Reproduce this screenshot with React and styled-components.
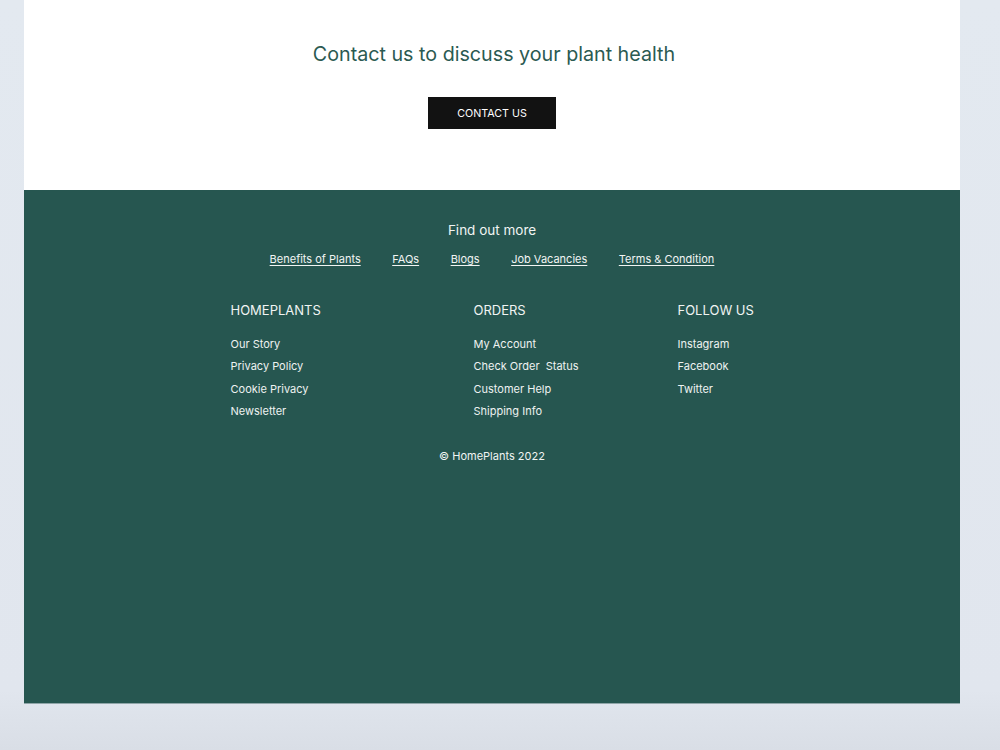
import React from 'react';
import styled, { createGlobalStyle } from 'styled-components';

const GlobalStyle = createGlobalStyle`
  html, body {
    margin: 0;
    padding: 0;
  }
  body {
    min-height: 750px;
    background: linear-gradient(to bottom, #e3e9f0 0%, #e1e6ee 92%, #d9dee6 100%);
    font-family: Inter, "Noto Sans", sans-serif;
  }
`;

const Page = styled.div`
  width: 936px;
  margin-left: 24px;
`;

const ContactSection = styled.section`
  height: 190px;
  background: #ffffff;
  display: flex;
  flex-direction: column;
  align-items: center;
  padding-top: 42px;
  box-sizing: border-box;
`;

const Heading = styled.h2`
  margin: 0 0 0 4px;
  font-size: 19.7px;
  font-weight: 400;
  color: #2b5a52;
  line-height: 24px;
`;

const ContactButton = styled.button`
  margin-top: 31px;
  width: 128px;
  height: 32px;
  border: none;
  background: #121212;
  color: #ffffff;
  font-family: Inter, sans-serif;
  font-size: 10.7px;
  text-transform: uppercase;
  cursor: pointer;
`;

const Footer = styled.footer`
  height: 514px;
  background: #265650;
  color: #f1f4f3;
  box-sizing: border-box;
  padding-top: 30px;
  display: flex;
  flex-direction: column;
  align-items: center;
  border-bottom: 1px solid #8fa5a8;
`;

const FooterTitle = styled.div`
  font-size: 13.5px;
  line-height: 20px;
`;

const LinkRow = styled.nav`
  display: flex;
  gap: 31.5px;
  margin-top: 12px;
`;

const TopLink = styled.a`
  color: #f1f4f3;
  font-size: 11px;
  line-height: 14px;
  text-decoration: underline;
  text-underline-offset: 2px;
`;

const Columns = styled.div`
  display: grid;
  grid-template-columns: 243px 204px 80px;
  margin-top: 36px;
  margin-left: 4px;
`;

const Column = styled.div`
  display: flex;
  flex-direction: column;
`;

const ColumnTitle = styled.div`
  font-size: 13px;
  line-height: 16px;
  text-transform: uppercase;
  margin-bottom: 15px;
`;

const ColumnLink = styled.a`
  color: #eef2f1;
  font-size: 11px;
  line-height: 22.3px;
  white-space: pre;
  text-decoration: none;
`;

const Copyright = styled.div`
  margin-top: 27px;
  font-size: 11px;
  line-height: 14px;
`;

const topLinks = ['Benefits of Plants', 'FAQs', 'Blogs', 'Job Vacancies', 'Terms & Condition'];

const columns = [
  { title: 'HomePlants', items: ['Our Story', 'Privacy Policy', 'Cookie Privacy', 'Newsletter'] },
  { title: 'Orders', items: ['My Account', 'Check Order  Status', 'Customer Help', 'Shipping Info'] },
  { title: 'Follow Us', items: ['Instagram', 'Facebook', 'Twitter'] },
];

const App = () => {
  return (
    <>
      <GlobalStyle />
      <Page>
        <ContactSection>
          <Heading>Contact us to discuss your plant health</Heading>
          <ContactButton>Contact us</ContactButton>
        </ContactSection>
        <Footer>
          <FooterTitle>Find out more</FooterTitle>
          <LinkRow>
            {topLinks.map((link) => (
              <TopLink key={link} href="#">{link}</TopLink>
            ))}
          </LinkRow>
          <Columns>
            {columns.map((col) => (
              <Column key={col.title}>
                <ColumnTitle>{col.title}</ColumnTitle>
                {col.items.map((item) => (
                  <ColumnLink key={item} href="#">{item}</ColumnLink>
                ))}
              </Column>
            ))}
          </Columns>
          <Copyright>© HomePlants 2022</Copyright>
        </Footer>
      </Page>
    </>
  );
};

export default App;
